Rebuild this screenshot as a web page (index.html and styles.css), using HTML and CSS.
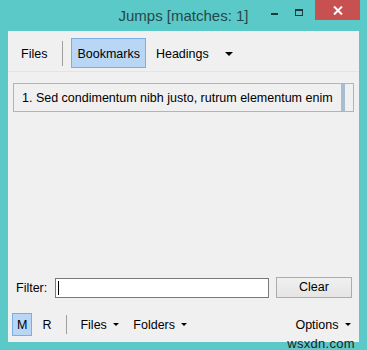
FILE: index.html
```html
<!DOCTYPE html>
<html>
<head>
<title>Jumps</title>
<link rel="stylesheet" href="styles.css">
</head>
<body>
<div class="window">
	<div class="titlebar">
		<div class="title">Jumps [matches: 1]</div>
		<div class="ctrls">
			<div class="btnMin"><span></span></div>
			<div class="btnMax"><span></span></div>
			<div class="btnClose">
				<svg width="10" height="9" viewBox="0 0 10 9"><path d="M1 0.5 L9 8.5 M9 0.5 L1 8.5" stroke="#fff" stroke-width="2"/></svg>
			</div>
		</div>
	</div>
	<div class="client">
		<div class="toolbar">
			<div class="tbItem">Files</div>
			<div class="tbSep"></div>
			<div class="tbItem active">Bookmarks</div>
			<div class="tbItem head">Headings</div>
			<div class="tbItem drop"><span class="arrow big"></span></div>
		</div>
		<div class="list">
			<div class="listItem">
				<span class="itemText">1. Sed condimentum nibh justo, rutrum elementum enim</span>
				<span class="marker"></span>
			</div>
		</div>
		<div class="spacer"></div>
		<div class="filterRow">
			<label class="lblFilter">Filter:</label>
			<div class="txtFilter"><span class="caret"></span></div>
			<div class="btnClear">Clear</div>
		</div>
		<div class="statusbar">
			<div class="sbItem active">M</div>
			<div class="sbItem wide">R</div>
			<div class="sbSep"></div>
			<div class="sbItem">Files <span class="arrow"></span></div>
			<div class="sbItem">Folders <span class="arrow"></span></div>
			<div class="sbFill"></div>
			<div class="sbItem">Options <span class="arrow"></span></div>
		</div>
	</div>
	<div class="watermark">wsxdn.com</div>
</div>
</body>
</html>
```

FILE: styles.css
```css
body {
	margin: 0;
	font-family: "Liberation Sans", Arial, sans-serif;
	font-size: 12px;
	color: #000;
}

.window {
	position: relative;
	width: 367px;
	height: 350px;
	background-color: #5bc9c8;
	display: flex;
	flex-direction: column;
	overflow: hidden;
}

.titlebar {
	height: 31px;
	display: flex;
	position: relative;
}

.title {
	flex: 1;
	text-align: center;
	font-size: 15px;
	line-height: 31px;
	color: #24484a;
}

.ctrls {
	position: absolute;
	right: 7px;
	top: 0;
	display: flex;
}

.btnMin, .btnMax {
	width: 26px;
	height: 20px;
	position: relative;
}

.btnMin span {
	position: absolute;
	left: 8px;
	top: 13px;
	width: 7px;
	height: 2px;
	background-color: #1e3a3c;
}

.btnMax span {
	position: absolute;
	left: 6px;
	top: 9px;
	width: 6px;
	height: 4px;
	border: 1px solid #1e3a3c;
	border-top-width: 2px;
}

.btnClose {
	width: 45px;
	height: 20px;
	background-color: #c75050;
	display: flex;
	align-items: center;
	justify-content: center;
}

.client {
	flex: 1;
	margin: 0 8px 8px 8px;
	background-color: #f0f0f0;
	display: flex;
	flex-direction: column;
}

.toolbar {
	height: 30px;
	padding: 7px 0 3px 5px;
	display: flex;
	align-items: center;
	border-bottom: 1px solid #e4e4e4;
}

.tbItem {
	height: 28px;
	line-height: 30px;
	padding: 0 7px;
	border: 1px solid transparent;
	font-size: 12.5px;
}

.tbItem.active {
	background-color: #b9d7f5;
	border-color: #7aaee6;
	padding: 0 5px;
}

.tbItem.head {
	padding-left: 9px;
}

.tbItem.drop {
	padding: 0 4px;
	line-height: 28px;
}

.tbSep {
	width: 1px;
	height: 25px;
	background-color: #a0a0a0;
	margin: 0 8px 0 7px;
}

.arrow {
	display: inline-block;
	width: 0;
	height: 0;
	border-left: 3px solid transparent;
	border-right: 3px solid transparent;
	border-top: 3px solid #000;
	vertical-align: middle;
	margin-left: 3px;
	margin-bottom: 3px;
}

.arrow.big {
	border-left-width: 4px;
	border-right-width: 4px;
	border-top-width: 4px;
	margin-bottom: 0px;
}

.list {
	margin: 11px 5px 0 5px;
}

.listItem {
	height: 27px;
	border: 1px solid #b4b4b4;
	background-color: #f0f0f0;
	display: flex;
	align-items: center;
	justify-content: space-between;
	padding-left: 8px;
	font-size: 12.5px;
}

.itemText {
	white-space: nowrap;
}

.marker {
	flex: none;
	width: 4px;
	height: 27px;
	background-color: #a9bdd1;
	margin-right: 8px;
}

.spacer {
	flex: 1;
}

.filterRow {
	display: flex;
	align-items: center;
	height: 21px;
	padding-left: 8px;
	font-size: 12.5px;
}

.lblFilter {
	width: 39px;
}

.txtFilter {
	width: 212px;
	height: 18px;
	border: 1px solid #7a7a7a;
	background-color: #fff;
	display: flex;
	align-items: center;
}

.caret {
	width: 1px;
	height: 14px;
	background-color: #000;
	margin-left: 2px;
}

.btnClear {
	width: 74px;
	height: 19px;
	margin-left: 7px;
	border: 1px solid #acacac;
	background: linear-gradient(#f0f0f0, #e5e5e5);
	text-align: center;
	line-height: 19px;
}

.statusbar {
	display: flex;
	align-items: center;
	height: 23px;
	margin: 15px 0 6px 4px;
	padding-right: 1px;
}

.sbItem {
	height: 21px;
	line-height: 23px;
	padding: 0 6px;
	border: 1px solid transparent;
	font-size: 12.5px;
}

.sbItem.active {
	background-color: #b9d7f5;
	border-color: #7aaee6;
	padding: 0 4px;
}

.sbItem.wide {
	padding: 0 9px;
}

.sbSep {
	width: 1px;
	height: 19px;
	background-color: #a0a0a0;
	margin: 0 6px 0 5px;
}

.sbFill {
	flex: 1;
}

.watermark {
	position: absolute;
	right: 12px;
	bottom: -1px;
	font-size: 13px;
	color: #222;
	letter-spacing: 0.3px;
}
```
